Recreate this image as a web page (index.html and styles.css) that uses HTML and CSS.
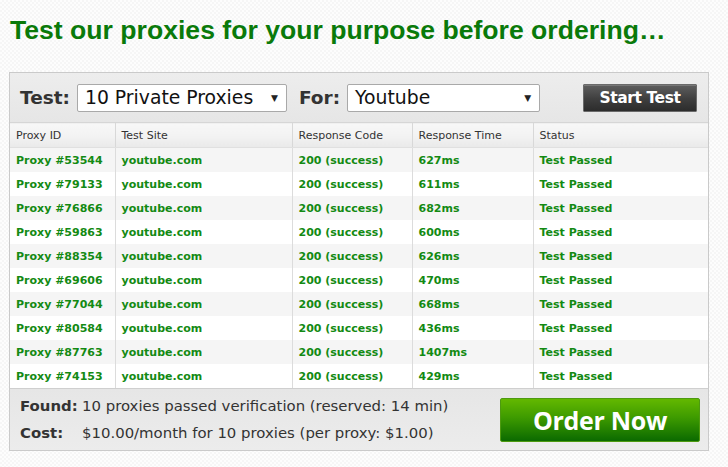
FILE: index.html
```html
<!DOCTYPE html>
<html>
<head>
<meta charset="utf-8">
<link rel="stylesheet" href="styles.css">
</head>
<body>
<h1 class="title">Test our proxies for your purpose before ordering…</h1>
<div class="panel">
  <div class="toolbar">
    <label class="lbl">Test:</label>
    <div class="select sel-test"><span>10 Private Proxies</span><span class="arrow">▼</span></div>
    <label class="lbl lbl-for">For:</label>
    <div class="select sel-for"><span>Youtube</span><span class="arrow">▼</span></div>
    <button class="start">Start Test</button>
  </div>
  <table class="grid">
    <colgroup><col class="c1"><col class="c2"><col class="c3"><col class="c4"><col class="c5"></colgroup>
    <thead>
      <tr><th>Proxy ID</th><th>Test Site</th><th>Response Code</th><th>Response Time</th><th>Status</th></tr>
    </thead>
    <tbody>
      <tr><td>Proxy #53544</td><td>youtube.com</td><td>200 (success)</td><td>627ms</td><td>Test Passed</td></tr>
      <tr><td>Proxy #79133</td><td>youtube.com</td><td>200 (success)</td><td>611ms</td><td>Test Passed</td></tr>
      <tr><td>Proxy #76866</td><td>youtube.com</td><td>200 (success)</td><td>682ms</td><td>Test Passed</td></tr>
      <tr><td>Proxy #59863</td><td>youtube.com</td><td>200 (success)</td><td>600ms</td><td>Test Passed</td></tr>
      <tr><td>Proxy #88354</td><td>youtube.com</td><td>200 (success)</td><td>626ms</td><td>Test Passed</td></tr>
      <tr><td>Proxy #69606</td><td>youtube.com</td><td>200 (success)</td><td>470ms</td><td>Test Passed</td></tr>
      <tr><td>Proxy #77044</td><td>youtube.com</td><td>200 (success)</td><td>668ms</td><td>Test Passed</td></tr>
      <tr><td>Proxy #80584</td><td>youtube.com</td><td>200 (success)</td><td>436ms</td><td>Test Passed</td></tr>
      <tr><td>Proxy #87763</td><td>youtube.com</td><td>200 (success)</td><td>1407ms</td><td>Test Passed</td></tr>
      <tr><td>Proxy #74153</td><td>youtube.com</td><td>200 (success)</td><td>429ms</td><td>Test Passed</td></tr>
    </tbody>
  </table>
  <div class="footer">
    <div class="info">
      <div class="line"><b class="key">Found:</b><span>10 proxies passed verification (reserved: 14 min)</span></div>
      <div class="line"><b class="key">Cost:</b><span>$10.00/month for 10 proxies (per proxy: $1.00)</span></div>
    </div>
    <button class="order">Order Now</button>
  </div>
</div>
</body>
</html>
```
FILE: styles.css
```css
html, body { margin: 0; padding: 0; }
body {
  background-color: #fdfdfd;
  background-image:
    linear-gradient(45deg, #f6f6f6 25%, transparent 25%, transparent 75%, #f6f6f6 75%),
    linear-gradient(45deg, #f6f6f6 25%, transparent 25%, transparent 75%, #f6f6f6 75%);
  background-size: 4px 4px;
  background-position: 0 0, 2px 2px;
  padding: 0 9px;
  font-family: "DejaVu Sans", Verdana, sans-serif;
  color: #333;
}
.title {
  margin: 15px 0 0 1px;
  font-family: "Liberation Sans", Arial, sans-serif;
  font-weight: bold;
  font-size: 26.6px;
  line-height: 30px;
  color: #0a7a0a;
}
.panel {
  margin-top: 27px;
  width: 698px;
  border: 1px solid #cacaca;
  background: #e9e9e9;
}
.toolbar {
  height: 49px;
  display: flex;
  align-items: center;
  padding: 0 11px 0 10px;
  background: linear-gradient(#ededed, #e6e6e6);
}
.lbl {
  font-weight: bold;
  font-size: 18.5px;
  color: #333;
  margin-right: 7px;
}
.lbl-for { margin-left: 12px; margin-right: 7px; }
.select {
  box-sizing: border-box;
  height: 28px;
  background: #fff;
  border: 1px solid #a9a9a9;
  border-radius: 2px;
  display: flex;
  align-items: center;
  justify-content: space-between;
  padding: 0 8px 0 7px;
  font-size: 18.8px;
  color: #111;
}
.sel-test { width: 210px; }
.sel-for { width: 193px; }
.arrow { font-size: 9px; color: #222; }
.start {
  margin-left: auto;
  width: 114px;
  height: 28px;
  border: 1px solid #6a6a6a;
  border-radius: 1px;
  background: linear-gradient(#5e5e5e, #3e3e3e 55%, #2c2c2c);
  color: #fff;
  font-family: "DejaVu Sans", Verdana, sans-serif;
  font-weight: bold;
  font-size: 15.5px;
  letter-spacing: -0.4px;
  padding: 0;
  box-shadow: inset 0 1px 0 #777;
}
.grid {
  width: 698px;
  border-collapse: collapse;
  table-layout: fixed;
  font-size: 11px;
}
.c1 { width: 105px; }
.c2 { width: 177px; }
.c3 { width: 120px; }
.c4 { width: 121px; }
.c5 { width: 175px; }
.grid th {
  height: 24px;
  padding: 0 0 0 6px;
  text-align: left;
  font-weight: normal;
  color: #333;
  background: linear-gradient(#f7f7f7, #f3f3f3 50%, #e9e9e9);
  border-top: 1px solid #d6d6d6;
  border-bottom: 1px solid #e0e0e0;
  border-left: 1px solid #d8d8d8;
}
.grid th:first-child, .grid td:first-child { border-left: none; }
.grid th:first-child, .grid td:first-child { padding-left: 6px; }
.grid td {
  height: 24px;
  padding: 0 0 0 6px;
  font-weight: bold;
  color: #138a13;
  border-left: 1px solid #dcdcdc;
  white-space: nowrap;
}
.grid tbody tr:nth-child(odd) td { background: #f5f5f5; }
.grid tbody tr:nth-child(even) td { background: #fff; }
.grid tbody tr:last-child td { border-bottom: 1px solid #cfcfcf; }
.footer {
  height: 61px;
  display: flex;
  align-items: center;
  padding: 0 8px 0 10px;
  background: linear-gradient(#e6e6e6, #ececec);
}
.info { display: flex; flex-direction: column; gap: 10px; font-size: 14.9px; line-height: 17px; color: #333; }
.line { display: flex; }
.key { width: 62px; color: #333; }
.order {
  margin-left: auto;
  width: 200px;
  height: 44px;
  border: 1px solid #4d9a10;
  border-radius: 2px;
  background: linear-gradient(#63b800, #3d9a00 45%, #0b6a00);
  color: #fff;
  font-family: "Open Sans", sans-serif;
  font-weight: bold;
  font-size: 25px;
  padding: 0;
  letter-spacing: -0.3px;
}
```
